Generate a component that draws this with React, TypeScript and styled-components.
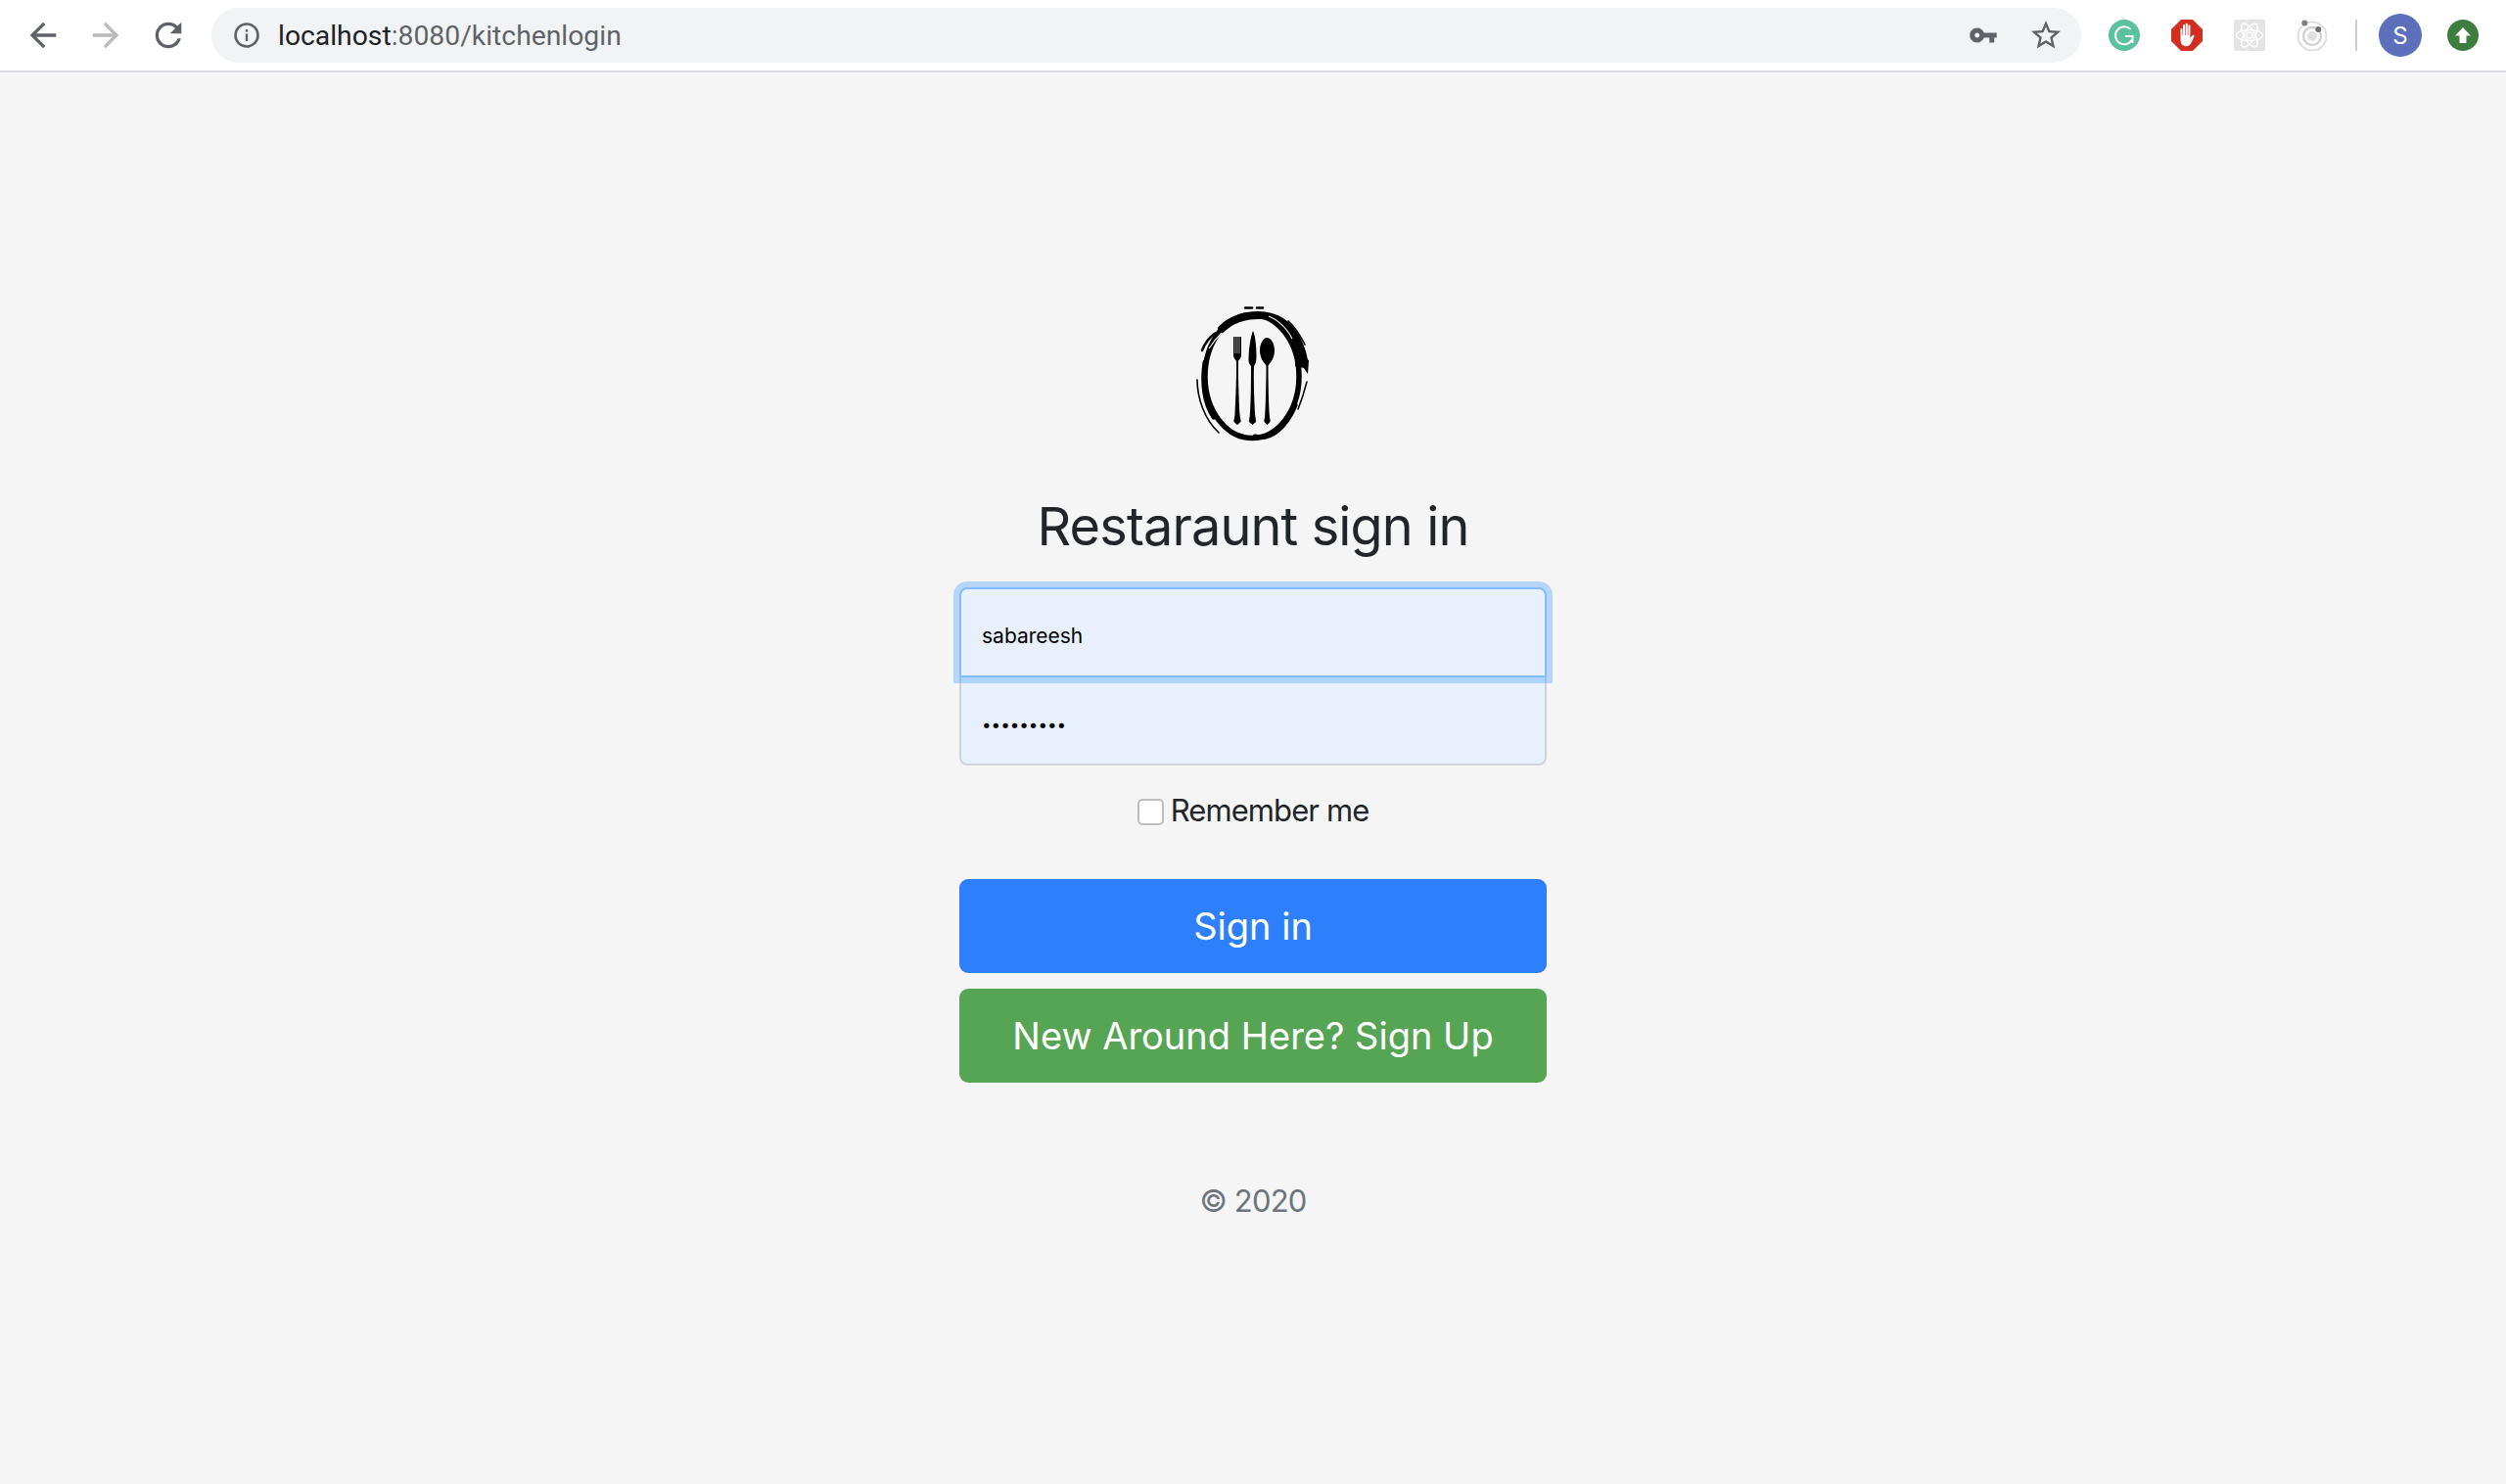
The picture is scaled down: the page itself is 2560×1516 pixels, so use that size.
import styled, { createGlobalStyle } from 'styled-components'

const GlobalStyle = createGlobalStyle`
  html, body {
    margin: 0;
    background: #f5f5f5;
  }
  * {
    box-sizing: border-box;
  }
`

const Page = styled.div`
  min-height: 1516px;
  display: flex;
  flex-direction: column;
  font-family: Inter, "Liberation Sans", sans-serif;
  color: #212529;
`

const Toolbar = styled.div`
  height: 74px;
  flex: none;
  display: flex;
  align-items: center;
  padding: 0 12px;
  background: #fff;
  border-bottom: 2px solid #dadce0;
`

const IconSlot = styled.div`
  width: 64px;
  height: 56px;
  flex: none;
  display: flex;
  align-items: center;
  justify-content: center;
`

const Omnibox = styled.div`
  flex: 1;
  height: 56px;
  margin: 0 12px;
  padding: 0 18px 0 22px;
  display: flex;
  align-items: center;
  border-radius: 28px;
  background: #f1f3f4;
`

const Url = styled.div`
  flex: 1;
  margin-left: 18px;
  font-family: Roboto, "Liberation Sans", sans-serif;
  font-size: 28.3px;
  color: #5f6368;
  span {
    color: #202124;
  }
`

const OmniIcon = styled.div<{ $gap?: number }>`
  display: flex;
  margin-left: ${props => props.$gap || 0}px;
`

const Divider = styled.div`
  width: 2px;
  height: 32px;
  margin: 0 22px 0 12px;
  background: #ccc;
`

const Avatar = styled.div`
  width: 44px;
  height: 44px;
  flex: none;
  display: flex;
  align-items: center;
  justify-content: center;
  border-radius: 50%;
  background: #5c6fbb;
  color: #fff;
  font-size: 24px;
`

const UpdateSlot = styled(IconSlot)`
  margin-left: 10px;
`

const Main = styled.main`
  width: 600px;
  margin: 0 auto;
  padding-top: 232px;
  display: flex;
  flex-direction: column;
  align-items: center;
`

const Logo = styled.svg`
  display: block;
  margin-bottom: 48px;
`

const Title = styled.h1`
  margin: 0 0 29px;
  font-size: 54px;
  line-height: 67px;
  font-weight: 400;
  letter-spacing: -0.85px;
`

const Field = styled.input<{ $focused?: boolean }>`
  display: block;
  width: 100%;
  height: 92px;
  margin: 0;
  padding: 7px 21px 0;
  position: relative;
  outline: none;
  background: #e8f0fe;
  color: #000;
  font-family: Inter, "Liberation Sans", sans-serif;
  font-size: ${props => (props.$focused ? '21px' : '17px')};
  border: 2px solid ${props => (props.$focused ? '#80bdff' : '#ced4da')};
  border-radius: ${props => (props.$focused ? '8px 8px 0 0' : '0 0 8px 8px')};
  ${props =>
    props.$focused
      ? 'z-index: 2; margin-bottom: -2px; box-shadow: 0 0 0 6px rgba(0, 123, 255, 0.25);'
      : ''}
`

const RememberRow = styled.label`
  margin: 22px 0 46px;
  display: flex;
  align-items: center;
  gap: 7px;
  font-size: 31px;
  line-height: 48px;
  letter-spacing: -0.9px;
`

const Checkbox = styled.input`
  width: 27px;
  height: 27px;
  margin: 3px 0 0;
  appearance: none;
  background: #fff;
  border: 2px solid #bdbdbd;
  border-radius: 5px;
`

const Button = styled.button<{ $color: string }>`
  width: 100%;
  height: 96px;
  padding: 0;
  display: block;
  border: 0;
  border-radius: 9px;
  background: ${props => props.$color};
  color: #fff;
  font-family: Inter, "Liberation Sans", sans-serif;
  font-size: 38px;
  & + & {
    margin-top: 16px;
  }
`

const Copyright = styled.p`
  margin: 97px 0 0;
  font-size: 31px;
  line-height: 48px;
  letter-spacing: -0.8px;
  color: #6c757d;
`

const NavIcon = ({ d, color }: { d: string; color: string }) => (
  <svg width='40' height='40' viewBox='0 0 24 24' fill={color}>
    <path d={d} />
  </svg>
)

const arrowBack = 'M20 11H7.83l5.59-5.59L12 4l-8 8 8 8 1.41-1.41L7.83 13H20v-2z'
const arrowForward = 'M12 4l-1.41 1.41L16.17 11H4v2h12.17l-5.58 5.59L12 20l8-8z'
const reload =
  'M17.65 6.35C16.2 4.9 14.21 4 12 4c-4.42 0-7.99 3.58-7.99 8s3.57 8 7.99 8c3.73 0 6.84-2.55 7.73-6h-2.08c-.82 2.33-3.04 4-5.65 4-3.31 0-6-2.69-6-6s2.69-6 6-6c1.66 0 3.14.69 4.22 1.78L13 11h7V4l-2.35 2.35z'

const InfoIcon = () => (
  <svg width='28' height='28' viewBox='0 0 28 28'>
    <circle cx='14' cy='14' r='11.5' fill='none' stroke='#5f6368' strokeWidth='2.6' />
    <rect x='12.8' y='12.5' width='2.4' height='7.5' fill='#5f6368' />
    <rect x='12.8' y='8' width='2.4' height='2.6' fill='#5f6368' />
  </svg>
)

const KeyIcon = () => (
  <svg width='30' height='30' viewBox='0 0 24 24' fill='#5f6368'>
    <path d='M12.65 10C11.83 7.67 9.61 6 7 6c-3.31 0-6 2.69-6 6s2.69 6 6 6c2.61 0 4.83-1.67 5.65-4H17v4h4v-4h2v-4H12.65zM7 14c-1.1 0-2-.9-2-2s.9-2 2-2 2 .9 2 2-.9 2-2 2z' />
  </svg>
)

const StarIcon = () => (
  <svg width='36' height='36' viewBox='0 0 24 24' fill='#5f6368'>
    <path d='M22 9.24l-7.19-.62L12 2 9.19 8.63 2 9.24l5.46 4.73L5.82 21 12 17.27 18.18 21l-1.63-7.03L22 9.24zM12 15.4l-3.76 2.27 1-4.28-3.32-2.88 4.38-.38L12 6.1l1.71 4.04 4.38.38-3.32 2.88 1 4.28L12 15.4z' />
  </svg>
)

const GrammarlyIcon = () => (
  <svg width='32' height='32' viewBox='0 0 32 32'>
    <circle cx='16' cy='16' r='16' fill='#5bc29e' />
    <path d='M22.500 10A9 9 0 1 0 24 20.500' fill='none' stroke='#fff' strokeWidth='2' />
    <path d='M17 17h7.500v7' fill='none' stroke='#fff' strokeWidth='2' />
  </svg>
)

const AdblockIcon = () => (
  <svg width='32' height='32' viewBox='0 0 32 32'>
    <path d='M10 0h12l10 10v12L22 32H10L0 22V10z' fill='#d22f22' />
    <path
      d='M9.500 10c0-1.400 2-1.400 2 0v6h.6V6c0-1.400 2-1.400 2 0v10h.6V4.700c0-1.400 2.100-1.400 2.100 0V16h.6V6.500c0-1.400 2-1.400 2 0V19c1-1.200 2-3 3-3.200 1.200-.2 1.500.8 1 1.700-1.300 2.300-2.200 5.200-3.700 7.500-1 1.400-2.400 2.200-4.200 2.200-3.600 0-5.900-2.400-5.900-6z'
      fill='#fff'
    />
  </svg>
)

const ReactToolsIcon = () => (
  <svg width='32' height='32' viewBox='0 0 32 32'>
    <rect width='32' height='32' rx='2' fill='#e4e4e4' />
    <g fill='none' stroke='#fff' strokeWidth='1.5'>
      <ellipse cx='16' cy='16' rx='13.500' ry='5.500' />
      <ellipse cx='16' cy='16' rx='13.500' ry='5.500' transform='rotate(60 16 16)' />
      <ellipse cx='16' cy='16' rx='13.500' ry='5.500' transform='rotate(120 16 16)' />
      <circle cx='16' cy='16' r='3' />
    </g>
  </svg>
)

const OrbitIcon = () => (
  <svg width='32' height='32' viewBox='0 0 32 32'>
    <circle cx='16' cy='17' r='14.500' fill='none' stroke='#dedede' strokeWidth='2' />
    <circle cx='16' cy='17' r='9' fill='none' stroke='#d2d2d2' strokeWidth='2.400' />
    <circle cx='16' cy='17' r='5' fill='#e0e0e0' />
    <circle cx='8.300' cy='3.500' r='3' fill='#808080' />
    <circle cx='22.300' cy='10' r='3' fill='#707070' />
  </svg>
)

const UpdateIcon = () => (
  <svg width='32' height='32' viewBox='0 0 32 32'>
    <circle cx='16' cy='16' r='16' fill='#3d7d3f' />
    <path d='M16 8l8 8.500h-4.500V24h-7v-7.500H8z' fill='#fff' />
  </svg>
)

// plate ring with cutlery, coordinates read off the reference crop
const RestaurantLogo = () => (
  <Logo width='130' height='150' viewBox='25 16 130 150'>
    <g fill='none' stroke='#000' strokeLinecap='round'>
      <ellipse cx='89' cy='94.500' rx='48' ry='63' strokeWidth='5.500' />
      <path d='M58 46C72 32 100 27 118 38 129 45 138 58 142 78' strokeWidth='8' />
      <path d='M92 156C108 160 124 146 133 124' strokeWidth='5' />
      <path d='M41 80C38 100 40 122 50 136' strokeWidth='5' />
      <path d='M33 98C33 116 40 138 55 152' strokeWidth='1.600' />
      <path d='M38 68C41 60 46 54 52 50' strokeWidth='2.600' />
      <path d='M82 24.500H89M94 24.500H100' strokeWidth='2.600' />
      <path d='M126 38C134 45 139 54 143 62' strokeWidth='1.600' />
      <path d='M136 128C140 118 143 108 145 100' strokeWidth='1.500' />
    </g>
    <g fill='none' stroke='#f5f5f5'>
      <path d='M106 33C114 36 124 44 130 56' strokeWidth='1.100' />
      <path d='M45 66C49 60 53 55 58 50' strokeWidth='1.100' />
    </g>
    <path d='M133 74L147 78 146 92 142 86 133 84z' fill='#000' />
    <g fill='#000'>
      <path d='M70 54h1.500v17h.600V54h1.500v17h.600V54h1.500v17h.600V54H78v19c0 3-2.200 4.500-3 6-.4 8 .6 40 1.500 54 .4 5 1.500 7 1 8l-3.500 3-3.500-3c-.5-1 .6-3 1-8 .9-14 1.900-46 1.500-54-.8-1.500-3-3-3-6z' />
      <path d='M90 48c2 4 3.500 14 3.500 26 0 6-1.500 9-2.500 10-.5 14 .3 38 1.200 50 .4 4 1.300 6 .8 7l-3.500 3-3.500-3c-.5-1 .4-3 .8-7 .8-10 1.200-26 1.200-50-1-1-2.500-3-2.500-6 0-14 3-27 4.500-30z' />
      <path d='M104 55c4.500 0 8 6 8 13 0 7-3.500 12-5.500 14-.8 1-1 1.500-1 3 0 14 .5 38 1.300 49 .3 4 1.200 6 .7 7l-3 3-3-3c-.5-1 .4-3 .7-7 .8-11 1.300-35 1.300-49 0-1.500-.2-2-1-3-2-2-5.500-7-5.500-14 0-7 3.500-13 7-13z' />
    </g>
  </Logo>
)

const App: React.FC = () => {
  return (
    <Page>
      <GlobalStyle />
      <Toolbar>
        <IconSlot>
          <NavIcon d={arrowBack} color='#5f6368' />
        </IconSlot>
        <IconSlot>
          <NavIcon d={arrowForward} color='#bababa' />
        </IconSlot>
        <IconSlot>
          <NavIcon d={reload} color='#5f6368' />
        </IconSlot>
        <Omnibox>
          <InfoIcon />
          <Url>
            <span>localhost</span>:8080/kitchenlogin
          </Url>
          <OmniIcon>
            <KeyIcon />
          </OmniIcon>
          <OmniIcon $gap={31}>
            <StarIcon />
          </OmniIcon>
        </Omnibox>
        <IconSlot>
          <GrammarlyIcon />
        </IconSlot>
        <IconSlot>
          <AdblockIcon />
        </IconSlot>
        <IconSlot>
          <ReactToolsIcon />
        </IconSlot>
        <IconSlot>
          <OrbitIcon />
        </IconSlot>
        <Divider />
        <Avatar>S</Avatar>
        <UpdateSlot>
          <UpdateIcon />
        </UpdateSlot>
      </Toolbar>
      <Main>
        <RestaurantLogo />
        <Title>Restaraunt sign in</Title>
        <Field $focused defaultValue='sabareesh' readOnly />
        <Field type='password' defaultValue='sabareesh' readOnly />
        <RememberRow>
          <Checkbox type='checkbox' />
          Remember me
        </RememberRow>
        <Button $color='#2e7ffb'>Sign in</Button>
        <Button $color='#56a554'>New Around Here? Sign Up</Button>
        <Copyright>© 2020</Copyright>
      </Main>
    </Page>
  )
}

export default App
